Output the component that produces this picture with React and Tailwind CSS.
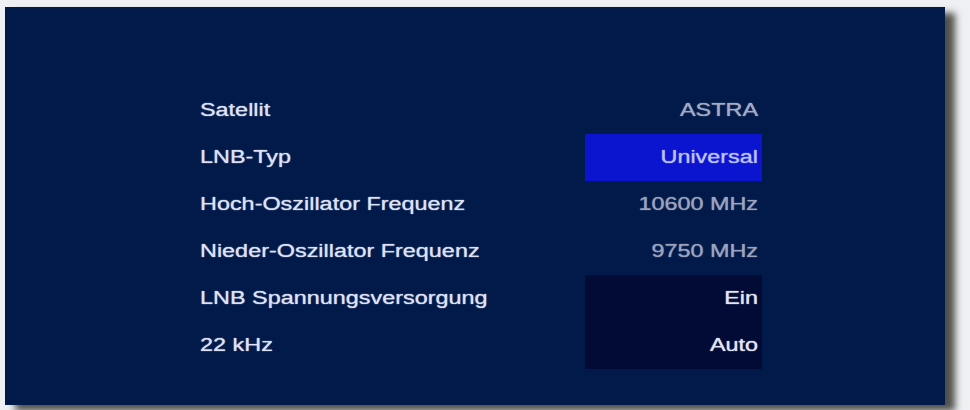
import React from 'react';

const rows = [
  { label: 'Satellit', value: 'ASTRA', tone: 'text-[#a3abc3]' },
  { label: 'LNB-Typ', value: 'Universal', tone: 'text-[#bcc0fb]', cell: 'bg-[#0b14cf]' },
  { label: 'Hoch-Oszillator Frequenz', value: '10600 MHz', tone: 'text-[#9ba3bd]' },
  { label: 'Nieder-Oszillator Frequenz', value: '9750 MHz', tone: 'text-[#9ba3bd]' },
  { label: 'LNB Spannungsversorgung', value: 'Ein', tone: 'text-[#e3e5f2]', cell: 'bg-[#020b36]' },
  { label: '22 kHz', value: 'Auto', tone: 'text-[#e3e5f2]', cell: 'bg-[#020b36]' },
];

const LnbSettings = () => {
  return (
    <div className="w-[970px] h-[410px] bg-[#eef0f3] pt-[7px] pl-[5px] overflow-hidden">
      <div className="w-[940px] h-[398px] bg-[#021a4a] shadow-[10px_6px_7px_rgba(62,62,56,0.9)] pt-[80px] pl-[195px] font-['Liberation_Sans',Arial,sans-serif] text-[18px] [text-shadow:0_0_1px_currentColor]">
        <div className="w-[562px]">
          {rows.map((r) => (
            <div key={r.label} className="flex h-[47px] items-center">
              <div className="flex-1 text-[#dde1f4]">
                <span className="inline-block origin-left scale-x-[1.3]">{r.label}</span>
              </div>
              <div className={`w-[177px] h-full flex items-center justify-end pr-[4px] ${r.cell || ''}`}>
                <span className={`inline-block origin-right scale-x-[1.3] ${r.tone}`}>{r.value}</span>
              </div>
            </div>
          ))}
        </div>
      </div>
    </div>
  );
};

export default function App() {
  return <LnbSettings />;
}
